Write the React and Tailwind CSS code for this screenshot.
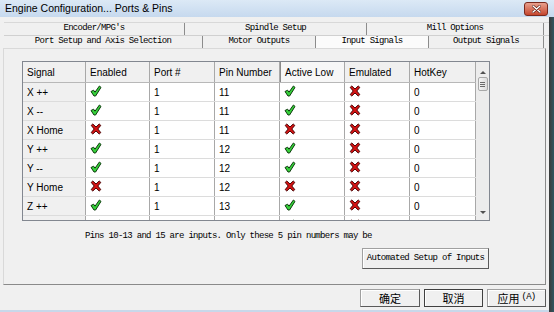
import React from 'react'

const ROWS = [
  { name: 'X ++', en: true, port: 1, pin: 11, low: true },
  { name: 'X --', en: true, port: 1, pin: 11, low: true },
  { name: 'X Home', en: false, port: 1, pin: 11, low: false },
  { name: 'Y ++', en: true, port: 1, pin: 12, low: true },
  { name: 'Y --', en: true, port: 1, pin: 12, low: true },
  { name: 'Y Home', en: false, port: 1, pin: 12, low: false },
  { name: 'Z ++', en: true, port: 1, pin: 13, low: true },
]

const HEADS = ['Signal', 'Enabled', 'Port #', 'Pin Number', 'Active Low', 'Emulated', 'HotKey']
const W = ['w-[63px]', 'w-[64px]', 'w-[65px]', 'w-[65px]', 'w-[65px]', 'w-[65px]', 'w-[66px]']

function Check() {
  return (
    <svg width="12" height="12" viewBox="0 0 12 12">
      <path d="M1 6.5 L3.6 5.2 L5 7.2 L9.4 1 L11 2.4 L5.6 11 L4 11 Z" fill="#36d23a" stroke="#0c3a0c" strokeWidth="1" strokeLinejoin="round" />
    </svg>
  )
}

function Cross() {
  return (
    <svg width="12" height="12" viewBox="0 0 12 12">
      <path d="M1.2 2.4 L2.8 1 L6 4 L9.2 1 L10.8 2.4 L7.8 6 L10.8 9.6 L9.2 11 L6 8 L2.8 11 L1.2 9.6 L4.2 6 Z" fill="#d61414" stroke="#4a0404" strokeWidth="1" strokeLinejoin="round" />
    </svg>
  )
}

function Tab({ w, label, active }) {
  return (
    <div className={`${w} h-full flex items-center justify-center border-r border-[#8c8c8c] ${active ? 'bg-[#fbfbfb] -mt-[2px] h-[15px]' : 'bg-[#f0f0f0]'}`}>
      <span className="font-['Liberation_Mono',monospace] text-[9px] tracking-[-0.7px] text-black">{label}</span>
    </div>
  )
}

function Btn({ w, children, strong }) {
  return (
    <div className={`${w} h-[18px] flex items-center justify-center bg-[#f0f0f0] border ${strong ? 'border-[#404040]' : 'border-[#a0a0a0] border-b-[#5a5a5a] border-r-[#5a5a5a]'} shadow-[inset_1px_1px_0_#ffffff]`}>
      {children}
    </div>
  )
}

export default function App() {
  return (
    <div className="w-[554px] h-[312px] flex flex-col bg-[#f0f0f0] overflow-hidden font-['Liberation_Sans',Arial,sans-serif] text-black">
      {/* title bar */}
      <div className="h-[17px] flex items-center justify-between bg-gradient-to-b from-[#dce9f6] to-[#c6d9ee] pl-[5px] pr-[6px]">
        <span className="text-[10.5px]">Engine Configuration... Ports &amp; Pins</span>
        <div className="w-[24px] h-[14px] mt-[1px] flex items-center justify-center rounded-[3px] border border-[#7a2a1e] bg-gradient-to-b from-[#e8a08e] to-[#c4442c]">
          <svg width="9" height="8" viewBox="0 0 9 8">
            <path d="M1 1 L8 7 M8 1 L1 7" stroke="#5a1a10" strokeWidth="2.6" strokeLinecap="round" />
            <path d="M1 1 L8 7 M8 1 L1 7" stroke="#ffffff" strokeWidth="1.4" strokeLinecap="round" />
          </svg>
        </div>
      </div>

      <div className="flex flex-1">
        <div className="w-[549px] flex flex-col">
          {/* tabs */}
          <div className="mt-[5px] ml-[4px] h-[13px] flex border-t border-[#d8d8d8]">
            <Tab w="w-[181px]" label="Encoder/MPG's" />
            <Tab w="w-[182px]" label="Spindle Setup" />
            <Tab w="w-[177px]" label="Mill Options" />
          </div>
          <div className="ml-[4px] h-[13px] flex items-end border-t border-[#d0d0d0]">
            <Tab w="w-[199px]" label="Port Setup and Axis Selection" />
            <Tab w="w-[113px]" label="Motor Outputs" />
            <Tab w="w-[113px]" label="Input Signals" active />
            <Tab w="w-[115px]" label="Output Signals" />
          </div>

          {/* panel */}
          <div className="ml-[3px] w-[543px] h-[237px] flex flex-col bg-[#f0f0f0] border border-[#d9d9d9] border-r-[#8a8a8a] border-b-[#8a8a8a]">
            <div className="ml-[18px] mt-[12px] w-[468px] h-[160px] flex border border-[#828790] bg-white overflow-hidden">
              <div className="flex-1 flex flex-col overflow-hidden text-[10px]">
                <div className="h-[21px] shrink-0 flex border-b border-[#b8b8b8]">
                  {HEADS.map((h, i) => (
                    <div key={h} className={`${W[i]} shrink-0 flex items-center pl-[4px] border-r border-[#a8a8a8] ${i === 4 ? 'bg-[#f7f7f7] border-l border-l-[#8a8a8a]' : 'bg-[#f0f0f0]'}`}>
                      {h}
                    </div>
                  ))}
                </div>
                {ROWS.map(r => (
                  <div key={r.name} className="h-[19px] shrink-0 flex border-b border-[#dcdcdc]">
                    <div className={`${W[0]} shrink-0 flex items-center pl-[4px] bg-[#f0f0f0] border-r border-[#a8a8a8]`}>{r.name}</div>
                    <div className={`${W[1]} shrink-0 pl-[4px] pt-[2px] border-r border-[#a8a8a8]`}>{r.en ? <Check /> : <Cross />}</div>
                    <div className={`${W[2]} shrink-0 flex items-center pl-[4px] border-r border-[#a8a8a8]`}>{r.port}</div>
                    <div className={`${W[3]} shrink-0 flex items-center pl-[4px] border-r border-[#a8a8a8]`}>{r.pin}</div>
                    <div className={`${W[4]} shrink-0 pl-[4px] pt-[2px] border-r border-[#a8a8a8]`}>{r.low ? <Check /> : <Cross />}</div>
                    <div className={`${W[5]} shrink-0 pl-[4px] pt-[2px] border-r border-[#a8a8a8]`}><Cross /></div>
                    <div className={`${W[6]} shrink-0 flex items-center pl-[4px] border-r border-[#a8a8a8]`}>0</div>
                  </div>
                ))}
                <div className="h-[6px] shrink-0 flex">
                  <div className={`${W[0]} shrink-0 bg-[#f0f0f0] border-r border-[#a8a8a8]`} />
                  <div className={`${W[1]} shrink-0 pl-[4px] pt-[3px] border-r border-[#a8a8a8]`}><Check /></div>
                  <div className={`${W[2]} shrink-0 border-r border-[#a8a8a8]`} />
                  <div className={`${W[3]} shrink-0 border-r border-[#a8a8a8]`} />
                  <div className={`${W[4]} shrink-0 pl-[4px] pt-[3px] border-r border-[#a8a8a8]`}><Check /></div>
                  <div className={`${W[5]} shrink-0 pl-[4px] pt-[3px] border-r border-[#a8a8a8]`}><Cross /></div>
                  <div className={`${W[6]} shrink-0 border-r border-[#a8a8a8]`} />
                </div>
              </div>
              {/* scrollbar */}
              <div className="w-[13px] shrink-0 flex flex-col items-center bg-[#ececec]">
                <div className="h-[14px] flex items-end justify-center pb-[2px]">
                  <div className="w-0 h-0 border-l-[3px] border-r-[3px] border-b-[3px] border-l-transparent border-r-transparent border-b-[#505050]" />
                </div>
                <div className="mt-[1px] w-[10px] h-[14px] rounded-[2px] border border-[#a8a8a8] bg-gradient-to-r from-[#f4f4f4] to-[#dcdcdc] flex flex-col items-center justify-center gap-[1px]">
                  <div className="w-[5px] h-px bg-[#6a6a6a]" />
                  <div className="w-[5px] h-px bg-[#6a6a6a]" />
                  <div className="w-[5px] h-px bg-[#6a6a6a]" />
                </div>
                <div className="flex-1" />
                <div className="h-[12px] flex items-start justify-center pt-[3px]">
                  <div className="w-0 h-0 border-l-[3px] border-r-[3px] border-t-[3px] border-l-transparent border-r-transparent border-t-[#505050]" />
                </div>
              </div>
            </div>

            <div className="ml-[81px] mt-[10px] h-[12px] flex items-center font-['Liberation_Mono',monospace] text-[9px] tracking-[-0.7px]">
              Pins 10-13 and 15 are inputs. Only these 5 pin numbers may be
            </div>

            <div className="ml-[358px] mt-[5px]">
              <Btn w="w-[127px] h-[21px]">
                <span className="font-['Liberation_Mono',monospace] text-[9px] tracking-[-0.7px]">Automated Setup of Inputs</span>
              </Btn>
            </div>
          </div>

          {/* dialog buttons */}
          <div className="mt-[4px] flex gap-[4px] ml-[360px]">
            <Btn w="w-[60px]"><span className="text-[11px] font-['Noto_Sans_CJK_SC',sans-serif] leading-none">确定</span></Btn>
            <Btn w="w-[59px]" strong><span className="text-[11px] font-['Noto_Sans_CJK_SC',sans-serif] leading-none">取消</span></Btn>
            <Btn w="w-[59px]">
              <span className="text-[11px] font-['Noto_Sans_CJK_SC',sans-serif] leading-none">应用</span>
              <span className="font-['Liberation_Mono',monospace] text-[9px] tracking-[-0.7px] ml-[2px]">(A)</span>
            </Btn>
          </div>
          <div className="flex-1" />
          <div className="h-[2px] bg-[#c8d8ea]" />
        </div>
        <div className="w-[5px] bg-gradient-to-r from-[#3a3a3a] to-[#2d5662]" />
      </div>
    </div>
  )
}
